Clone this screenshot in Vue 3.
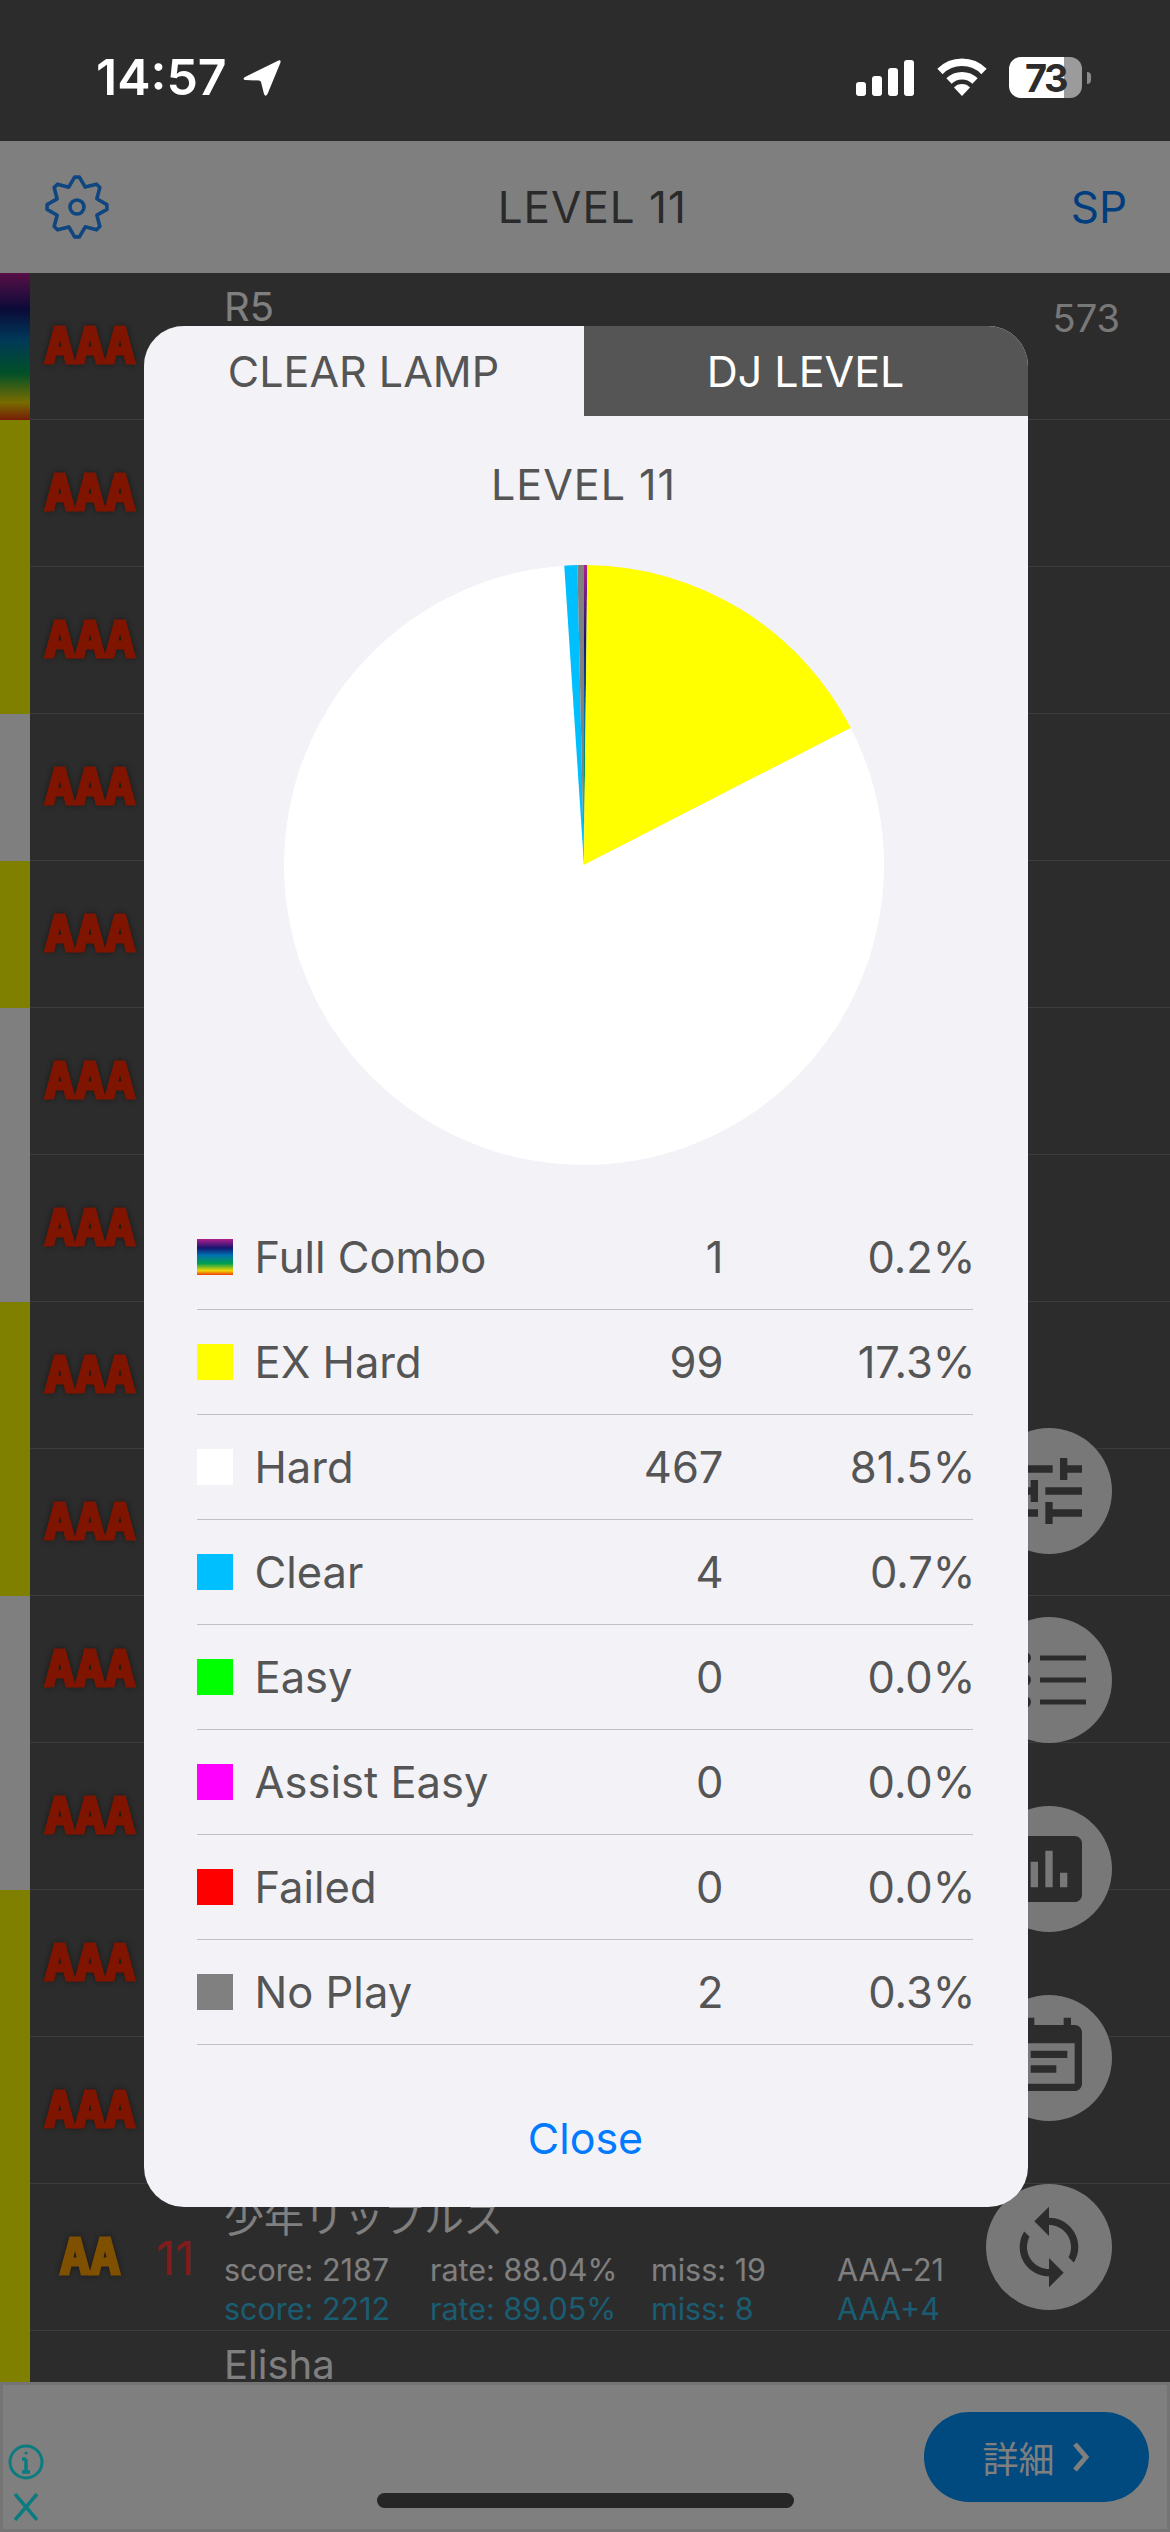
<script setup>
import { computed } from 'vue';

// lamp of each row, top to bottom
const lamps = ['fc', 'ex', 'ex', 'hard', 'ex', 'hard', 'hard', 'ex', 'ex', 'hard', 'hard', 'ex', 'ex', 'ex', 'ex'];

const rows = lamps.map((lamp, i) => ({ lamp, grade: i === 13 ? 'AA' : 'AAA' }));
rows[0].title = 'R5';
rows[0].count = 573;
rows[13].title = '少年リップルズ';
rows[13].level = 11;
rows[13].stats = [
  ['score: 2187', 'rate: 88.04%', 'miss: 19', 'AAA-21'],
  ['score: 2212', 'rate: 89.05%', 'miss: 8', 'AAA+4']
];
rows[14].title = 'Elisha';
rows[14].grade = '';

const legend = [
  { name: 'Full Combo', count: 1, pct: '0.2%', color: 'url(#rainbow)', cls: 'rainbow' },
  { name: 'EX Hard', count: 99, pct: '17.3%', color: '#ffff00' },
  { name: 'Hard', count: 467, pct: '81.5%', color: '#ffffff' },
  { name: 'Clear', count: 4, pct: '0.7%', color: '#00bfff' },
  { name: 'Easy', count: 0, pct: '0.0%', color: '#00ff00' },
  { name: 'Assist Easy', count: 0, pct: '0.0%', color: '#ff00ff' },
  { name: 'Failed', count: 0, pct: '0.0%', color: '#ff0000' },
  { name: 'No Play', count: 2, pct: '0.3%', color: '#808080' }
];

// pie slices, clockwise from 12 o'clock
const slices = computed(() => {
  const total = legend.reduce((sum, l) => sum + l.count, 0);
  let acc = 0;
  return legend.filter((l) => l.count > 0).map((l) => {
    const a0 = (acc / total) * Math.PI * 2;
    acc += l.count;
    const a1 = (acc / total) * Math.PI * 2;
    const big = a1 - a0 > Math.PI ? 1 : 0;
    const p = (a) => `${(300 + 300 * Math.sin(a)).toFixed(2)} ${(300 - 300 * Math.cos(a)).toFixed(2)}`;
    return { color: l.color, d: `M300 300 L${p(a0)} A300 300 0 ${big} 1 ${p(a1)} Z` };
  });
});

// 8 tooth gear outline
const gearPath = computed(() => {
  const pts = [];
  for (let i = 0; i < 8; i++) {
    const a = (i / 8) * Math.PI * 2;
    const at = (r, da) => {
      const x = 33 + r * Math.sin(a + da);
      const y = 33 - r * Math.cos(a + da);
      return `${x.toFixed(2)} ${y.toFixed(2)}`;
    };
    pts.push(at(30, -0.08), at(30, 0.08), at(21.5, 0.39));
  }
  return 'M' + pts.join(' L') + ' Z';
});
</script>

<template>
  <div class="screen">
    <div class="status">
      <div class="status-left">
        <span class="time">14:57</span>
        <svg class="arrow" width="40" height="38" viewBox="0 0 40 38"><path d="M36.5 1.5 L3 18 Q0 20 3 21 L17 21.5 Q18.5 21.5 19 23 L22 35 Q23.5 38.5 25.5 35 L38.5 3.5 Q39 .5 36.5 1.5 Z" fill="#fff" /></svg>
      </div>
      <div class="status-right">
        <div class="signal"><i></i><i></i><i></i><i></i></div>
        <svg class="wifi" width="50" height="38" viewBox="0 0 50 38">
          <path d="M3 13.5 A31 31 0 0 1 47 13.5" fill="none" stroke="#fff" stroke-width="7.5" />
          <path d="M12 23 A18.5 18.5 0 0 1 38 23" fill="none" stroke="#fff" stroke-width="7.5" />
          <path d="M25 38 L17 29.5 A11 11 0 0 1 33 29.5 Z" fill="#fff" />
        </svg>
        <div class="battery"><span>73</span></div>
        <div class="nub"></div>
      </div>
    </div>

    <header class="nav">
      <svg class="gear" width="66" height="66" viewBox="0 0 66 66" fill="none" stroke="#1e8cff" stroke-width="3.6" stroke-linejoin="round">
        <path :d="gearPath" />
        <circle cx="33" cy="33" r="7" />
      </svg>
      <span class="nav-title">LEVEL 11</span>
      <span class="nav-sp">SP</span>
    </header>

    <div class="list">
      <div v-for="(row, i) in rows" :key="i" class="row">
        <div class="lamp" :class="row.lamp"></div>
        <div class="grade" :class="{ aa: row.grade === 'AA' }">{{ row.grade }}</div>
        <div class="level">{{ row.level }}</div>
        <div class="info">
          <div class="title">{{ row.title }}</div>
          <div v-for="(line, j) in row.stats" :key="j" class="stats" :class="{ best: j === 1 }">
            <span v-for="s in line" :key="s">{{ s }}</span>
          </div>
        </div>
        <div v-if="row.count" class="count">{{ row.count }}</div>
      </div>
    </div>

    <div class="fabs">
      <div class="fab">
        <svg width="88" height="88" viewBox="0 0 24 24"><path d="M3 17v2h6v-2H3zM3 5v2h10V5H3zm10 16v-2h8v-2h-8v-2h-2v6h2zM7 9v2H3v2h4v2h2V9H7zm14 4v-2H11v2h10zm-6-4h2V7h4V5h-4V3h-2v6z" /></svg>
      </div>
      <div class="fab">
        <svg width="88" height="88" viewBox="0 0 88 88"><circle cx="20" cy="22" r="6" /><circle cx="20" cy="44" r="6" /><circle cx="20" cy="66" r="6" /><rect x="35" y="19.5" width="46" height="5" /><rect x="35" y="41.5" width="46" height="5" /><rect x="35" y="63.5" width="46" height="5" /></svg>
      </div>
      <div class="fab">
        <svg width="88" height="88" viewBox="0 0 24 24"><path d="M19 3H5c-1.1 0-2 .9-2 2v14c0 1.1.9 2 2 2h14c1.1 0 2-.9 2-2V5c0-1.1-.9-2-2-2zM9 17H7v-7h2v7zm4 0h-2V7h2v10zm4 0h-2v-4h2v4z" /></svg>
      </div>
      <div class="fab">
        <svg width="88" height="88" viewBox="0 0 24 24"><path d="M17 10H7v2h10v-2zm2-7h-1V1h-2v2H8V1H6v2H5c-1.11 0-1.99.9-1.99 2L3 19c0 1.1.89 2 2 2h14c1.1 0 2-.9 2-2V5c0-1.1-.9-2-2-2zm0 16H5V8h14v11zm-5-5H7v2h7v-2z" /></svg>
      </div>
      <div class="fab">
        <svg width="88" height="88" viewBox="0 0 24 24"><path d="M12 4V1L8 5l4 4V6c3.31 0 6 2.69 6 6 0 1.01-.25 1.97-.7 2.8l1.46 1.46C19.54 15.03 20 13.57 20 12c0-4.42-3.58-8-8-8zm0 14c-3.31 0-6-2.69-6-6 0-1.01.25-1.97.7-2.8L5.24 7.74C4.46 8.97 4 10.43 4 12c0 4.42 3.58 8 8 8v3l4-4-4-4v3z" /></svg>
      </div>
    </div>

    <footer class="ad">
      <div class="ad-marks">
        <svg width="36" height="38" viewBox="0 0 36 38" fill="none" stroke="#16f6ff" stroke-width="3"><circle cx="18" cy="19" r="16" /><path d="M18 16v13M14 29h8M14 16h4" stroke-width="3.5" /><circle cx="18" cy="10" r="1.6" fill="#16f6ff" stroke="none" /></svg>
        <svg width="28" height="28" viewBox="0 0 28 28" fill="none" stroke="#16f6ff" stroke-width="3.5"><path d="M3 1 L25 27 M25 1 L3 27" /></svg>
      </div>
      <div class="ad-btn">
        <span>詳細</span>
        <svg width="20" height="32" viewBox="0 0 20 32" fill="none" stroke="#fff" stroke-width="5"><path d="M4 3 L15 16 L4 29" /></svg>
      </div>
    </footer>

    <!-- scrim with the statistics dialog -->
    <div class="overlay">
      <div class="modal">
        <div class="tabs">
          <div class="tab active">CLEAR LAMP</div>
          <div class="tab">DJ LEVEL</div>
        </div>
        <div class="body">
          <div class="chart-title">LEVEL 11</div>
          <svg class="pie" width="600" height="600" viewBox="0 0 600 600">
            <defs>
              <linearGradient id="rainbow" gradientUnits="userSpaceOnUse" x1="0" y1="0" x2="0" y2="300">
                <stop offset="0" stop-color="#b01f8c" />
                <stop offset="0.25" stop-color="#141670" />
                <stop offset="0.5" stop-color="#0070b0" />
                <stop offset="0.7" stop-color="#00a050" />
                <stop offset="0.88" stop-color="#f0d800" />
                <stop offset="1" stop-color="#ee3a0a" />
              </linearGradient>
            </defs>
            <path v-for="(s, i) in slices" :key="i" :d="s.d" :fill="s.color" />
          </svg>
          <div class="legend">
            <div v-for="l in legend" :key="l.name" class="legend-row">
              <span class="swatch" :class="l.cls" :style="l.cls ? null : { background: l.color }"></span>
              <span>{{ l.name }}</span>
              <span class="num">{{ l.count }}</span>
              <span class="num">{{ l.pct }}</span>
            </div>
          </div>
        </div>
        <div class="close">Close</div>
      </div>
    </div>

    <div class="home-bar"></div>
  </div>
</template>

<style>
html, body {
  margin: 0;
  background: #2c2c2c;
}
</style>

<style scoped>
.screen {
  position: relative;
  width: 1170px;
  height: 2532px;
  overflow: hidden;
  display: flex;
  flex-direction: column;
  background: #585858;
  font-family: Inter, "Noto Sans CJK JP", sans-serif;
}

/* status bar sits above the scrim */
.status {
  position: relative;
  z-index: 3;
  height: 141px;
  flex: none;
  background: #2c2c2c;
  display: flex;
  justify-content: space-between;
  align-items: flex-start;
  padding: 57px 79px 0 96px;
  box-sizing: border-box;
  color: #fff;
}

.status-left {
  display: flex;
  align-items: center;
  gap: 15px;
  height: 41px;
}

.time {
  font-size: 50px;
  font-weight: 600;
  line-height: 41px;
}

.status-right {
  display: flex;
  align-items: flex-end;
  height: 41px;
}

.signal {
  display: flex;
  align-items: flex-end;
  gap: 6px;
  margin: 0 23px 2px 0;
}

.signal i {
  display: block;
  width: 10px;
  border-radius: 3px;
  background: #fff;
  height: 14px;
}

.signal i:nth-child(2) { height: 20px; }
.signal i:nth-child(3) { height: 28px; }
.signal i:nth-child(4) { height: 36px; }

.wifi {
  margin: 0 22px 2px 0;
}

.battery {
  width: 73px;
  height: 41px;
  border-radius: 12px;
  background: linear-gradient(90deg, #fff 75%, #9b9b9b 75%);
  display: flex;
  align-items: center;
  justify-content: center;
  color: #2c2c2c;
  font-size: 38px;
  font-weight: 700;
  letter-spacing: -2.5px;
}

.nub {
  width: 4px;
  height: 12px;
  margin: 0 0 14px 5px;
  border-radius: 0 5px 5px 0;
  background: #8a8a8a;
}

.nav {
  height: 132px;
  flex: none;
  background: #fff;
  display: flex;
  align-items: center;
  justify-content: space-between;
  padding: 0 43px 0 44px;
  box-sizing: border-box;
  font-size: 44px;
}

.nav-title {
  color: #555;
  margin-left: 4px;
  letter-spacing: 1px;
}

.nav-sp {
  color: #007aff;
}

.list {
  flex: 1;
  min-height: 0;
  overflow: hidden;
}

.row {
  height: 147px;
  box-sizing: border-box;
  border-bottom: 1px solid #787878;
  display: flex;
  align-items: center;
  position: relative;
}

.lamp {
  width: 30px;
  align-self: stretch;
  margin-bottom: -1px;
  flex: none;
}

.lamp.ex { background: #ffff00; }
.lamp.hard { background: #fff; }

.lamp.fc, .swatch.rainbow {
  background: linear-gradient(180deg, #b01f8c 0%, #141670 25%, #0070b0 45%, #00a050 68%, #f0d800 88%, #ee3a0a 100%);
}

.grade {
  width: 120px;
  flex: none;
  text-align: center;
  font-family: "DejaVu Sans Mono", monospace;
  font-weight: 700;
  font-size: 50px;
  line-height: 48px;
  color: #ff2a00;
  -webkit-text-stroke: 3px #ff2a00;
  text-shadow: 0 0 6px #333, 0 0 6px #333;
}

.grade.aa {
  color: #ffa000;
  -webkit-text-stroke-color: #ffa000;
}

.level {
  width: 74px;
  flex: none;
  box-sizing: border-box;
  padding-left: 6px;
  font-size: 47px;
  color: #ff3838;
}

.info {
  align-self: flex-start;
  padding-top: 16px;
  color: #fff;
}

.title {
  font-size: 40px;
  line-height: 36px;
  height: 36px;
  white-space: nowrap;
}

.stats {
  display: grid;
  grid-template-columns: 206px 221px 186px auto;
  font-size: 30.5px;
  line-height: 39px;
  white-space: nowrap;
}

.stats:nth-child(2) {
  margin-top: 14px;
}

.stats.best {
  color: #34b8e0;
}

.count {
  position: absolute;
  right: 50px;
  top: 22px;
  font-size: 38px;
  line-height: 46px;
  color: #f0f0f0;
}

/* round buttons on the right edge */
.fabs {
  position: absolute;
  left: 986px;
  top: 1428px;
  display: flex;
  flex-direction: column;
  gap: 63px;
}

.fab {
  width: 126px;
  height: 126px;
  border-radius: 50%;
  background: #f0f0f0;
  display: flex;
  align-items: center;
  justify-content: center;
}

.fab svg {
  fill: #585858;
}

.ad {
  position: relative;
  height: 150px;
  flex: none;
  box-sizing: border-box;
  background: #fff;
  border: 3px solid #e8e8e8;
}

.ad-marks {
  position: absolute;
  left: 5px;
  top: 58px;
  display: flex;
  flex-direction: column;
  align-items: center;
  gap: 12px;
}

.ad-btn {
  position: absolute;
  right: 18px;
  top: 27px;
  width: 225px;
  height: 90px;
  border-radius: 45px;
  background: #0094ff;
  color: #fff;
  font-size: 36px;
  display: flex;
  align-items: center;
  justify-content: center;
  gap: 16px;
}

.overlay {
  position: absolute;
  inset: 0;
  z-index: 2;
  background: rgba(0, 0, 0, 0.5);
  display: flex;
  align-items: center;
  justify-content: center;
}

.modal {
  width: 884px;
  margin-left: 1px;
  border-radius: 40px;
  overflow: hidden;
  background: #f2f2f7;
  color: #555;
  font-size: 43px;
}

.tabs {
  display: flex;
  height: 90px;
  background: #555;
}

.tab {
  flex: 1;
  display: flex;
  align-items: center;
  justify-content: center;
  color: #fff;
}

.tab.active {
  flex: none;
  width: 440px;
  background: #f2f2f7;
  color: #555;
}

.body {
  display: flex;
  flex-direction: column;
  padding: 0 55px 0 53px;
}

.chart-title {
  padding: 40px 2px 53px 0;
  line-height: 56px;
  text-align: center;
  letter-spacing: 1px;
}

.pie {
  display: block;
  margin-left: 87px;
}

.legend {
  margin-top: 40px;
  font-size: 43.5px;
}

.legend-row {
  height: 105px;
  box-sizing: border-box;
  border-bottom: 1px solid #c0c0c6;
  display: grid;
  grid-template-columns: 36px 1fr 100px 252px;
  align-items: center;
}

.swatch {
  width: 36px;
  height: 36px;
}

.legend-row span:nth-child(2) {
  padding-left: 22px;
}

.num {
  text-align: right;
  margin-right: -3px;
}

.close {
  padding: 65px 0 41px;
  line-height: 56px;
  text-align: center;
  color: #007aff;
}

.home-bar {
  position: absolute;
  z-index: 3;
  left: 377px;
  top: 2493px;
  width: 417px;
  height: 15px;
  border-radius: 8px;
  background: #262626;
}
</style>
